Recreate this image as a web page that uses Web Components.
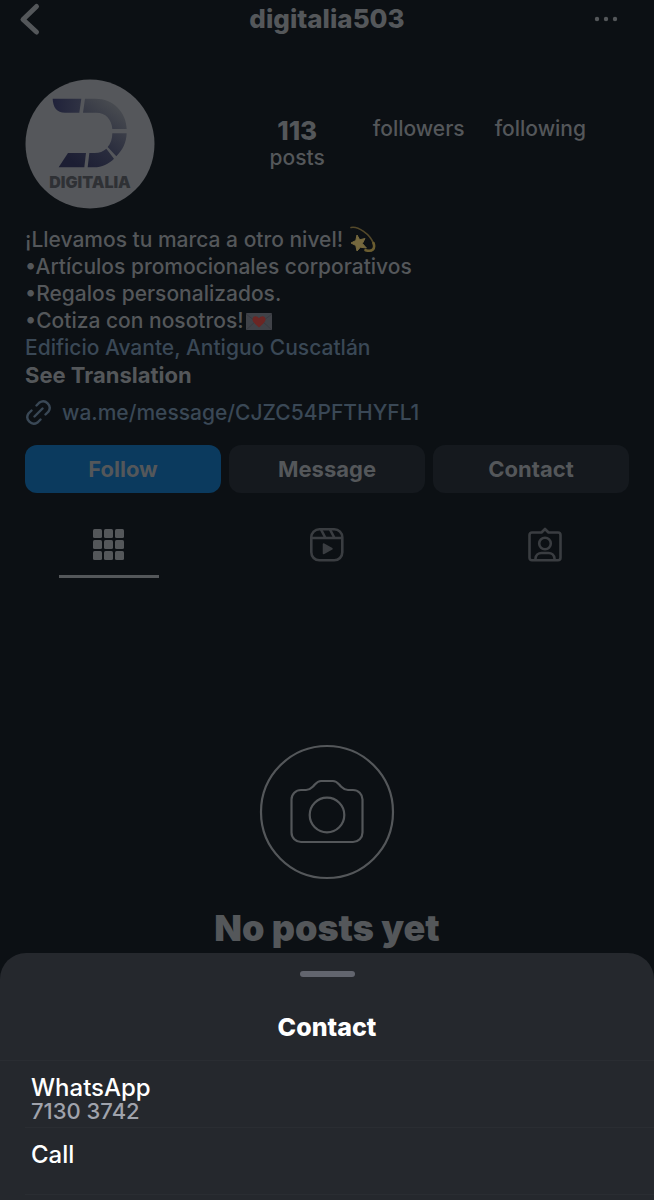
<!DOCTYPE html>
<html lang="es">
<head>
<meta charset="utf-8">
<meta name="viewport" content="width=device-width, initial-scale=1">
<title>digitalia503</title>
<style>
  html{ background: #0c1014; }
  body{
    margin: 0;
    font-family: Inter, "Liberation Sans", sans-serif;
    font-size: 21px;
    font-weight: 500;
    line-height: 27px;
    color: #54575a;
    --strong: #54575a;
    --link: #3a4856;
    --muted: #3a3d41;
  }
</style>
</head>
<body>
<profile-page>
  <profile-header slot="header">digitalia503</profile-header>
  <profile-summary slot="summary">
    <profile-stat label="posts">113</profile-stat>
    <profile-stat label="followers"></profile-stat>
    <profile-stat label="following"></profile-stat>
  </profile-summary>
  <profile-bio></profile-bio>
  <profile-actions>
    <action-button primary>Follow</action-button>
    <action-button>Message</action-button>
    <action-button>Contact</action-button>
  </profile-actions>
  <profile-tabs slot="tabs"></profile-tabs>
  <empty-posts slot="posts">No posts yet</empty-posts>
</profile-page>
<contact-sheet>
  <span slot="title">Contact</span>
  <sheet-row detail="7130 3742">WhatsApp</sheet-row>
  <sheet-row>Call</sheet-row>
</contact-sheet>

<script>
function define(name, html, setup){
  const template = document.createElement('template');
  template.innerHTML = html;

  window.customElements.define(name, class extends HTMLElement {
    constructor() {
      super();
      this.attachShadow({ mode: 'open' });
      this.shadowRoot.appendChild(template.content.cloneNode(true));
    }

    connectedCallback() {
      if(setup) setup(this, this.shadowRoot)
    }
  });
}

define("profile-page", `
  <style>
    :host{ display: block; }
    main{ display: flex; flex-direction: column; }
    .details{ padding: 0 25px; display: flex; flex-direction: column; }
  </style>
  <slot name="header"></slot>
  <main>
    <slot name="summary"></slot>
    <div class="details"><slot></slot></div>
    <slot name="tabs"></slot>
    <slot name="posts"></slot>
  </main>
`)

define("profile-header", `
  <style>
    :host{ display: block; }
    header{
      display: grid;
      grid-template-columns: 72px 1fr 72px;
      align-items: center;
      height: 38px;
      padding: 0 12px;
    }
    h1{ margin: 0; font-size: 26px; line-height: 30px; font-weight: 800; text-align: center; }
    button{ border: 0; background: none; padding: 0; color: inherit; height: 38px; display: flex; align-items: center; }
    .more{ justify-content: center; }
    svg{ display: block; }
  </style>
  <header>
    <button aria-label="Back">
      <svg width="32" height="38" viewBox="0 0 32 38" fill="none" stroke="currentColor" stroke-width="5" stroke-linecap="round" stroke-linejoin="round"><path d="M24.500 6.500 11 19.500 24.500 32"/></svg>
    </button>
    <h1><slot></slot></h1>
    <button class="more" aria-label="More">
      <svg width="28" height="8" viewBox="0 0 28 8" fill="currentColor"><circle cx="5" cy="4" r="2.200"/><circle cx="14" cy="4" r="2.200"/><circle cx="23" cy="4" r="2.200"/></svg>
    </button>
  </header>
`)

define("profile-avatar", `
  <style>
    :host{ display: block; width: 130px; height: 130px; }
    svg{ display: block; width: 100%; height: 100%; }
    text{ font-size: 16px; font-weight: 900; }
  </style>
  <svg viewBox="0 0 130 130" role="img" aria-label="Digitalia">
    <defs>
      <linearGradient id="ink" gradientUnits="userSpaceOnUse" x1="180" y1="270" x2="310" y2="100">
        <stop offset="0" stop-color="#1c1e33"/><stop offset=".45" stop-color="#2a2d3e"/><stop offset="1" stop-color="#484b50"/>
      </linearGradient>
      <linearGradient id="tip" gradientUnits="userSpaceOnUse" x1="129" y1="0" x2="214" y2="0">
        <stop offset="0" stop-color="#20223a"/><stop offset="1" stop-color="#2f3243"/>
      </linearGradient>
    </defs>
    <circle cx="65" cy="65" r="64.500" fill="#55575b"/>
    <g transform="scale(.3333) translate(-46 -28)" fill="url(#ink)">
      <path fill="url(#tip)" d="M129 87h86l-6 42h-43c-25 0-36-16-37-42z"/>
      <path d="M226 87h32c52 0 92 40 93 91h-43c-2-29-20-49-48-49h-40z"/>
      <path d="M308 191h43c-1 28-12 50-31 69l-26-28c9-10 14-24 14-41z"/>
      <path d="M290 237l23 30c-16 16-36 26-60 26h-19l5-43h16c14 0 26-5 35-13z"/>
      <path d="M175 250h54l-5 43h-77z"/>
    </g>
    <text x="65" y="109" text-anchor="middle" fill="#2f3135">DIGITALIA</text>
  </svg>
`)

define("profile-stat", `
  <style>
    :host{ display: flex; flex-direction: column; align-items: center; line-height: 27px; }
    b{ font-size: 26px; font-weight: 800; }
  </style>
  <b><slot></slot></b>
  <span id="label"></span>
`, (el, root) => {
  root.getElementById("label").textContent = el.getAttribute("label")
  root.querySelector("b").hidden = !el.textContent
})

define("profile-summary", `
  <style>
    :host{ display: flex; align-items: center; justify-content: space-between; padding: 41px 68px 0 25px; }
    .stats{ display: flex; align-items: flex-start; gap: 30px; padding-bottom: 2px; }
    ::slotted(:first-child){ margin-right: 18px; padding-top: 2px; }
  </style>
  <profile-avatar></profile-avatar>
  <div class="stats"><slot></slot></div>
`)

define("profile-bio", `
  <style>
    :host{ display: block; padding-top: 17px; }
    p{ margin: 0; }
    svg{ vertical-align: -6px; }
    a{ color: var(--link); text-decoration: none; }
    button{ display: block; border: 0; background: none; margin: 1px 0 0; padding: 0; font: inherit; font-size: 22px; font-weight: 700; color: var(--strong); }
    .url{ display: flex; align-items: center; gap: 10px; margin-top: 10px; }
  </style>
  <p>¡Llevamos tu marca a otro nivel!
    <svg width="27" height="27" viewBox="0 0 27 27" fill="none" role="img" aria-label="dizzy">
      <path d="M2 1.500C9 0 21 8 24.500 17.500 26.500 23.500 23 26 16.500 24" stroke="#54492a" stroke-width="1.600" stroke-linecap="round"/>
      <path d="M24.500 17c2 6-1 9-8 7.200" stroke="#6b5d30" stroke-width="2.600" stroke-linecap="round"/>
      <path d="M8 9l2.700 4.800 5.300-1.300-2.600 5 4 4.500-6-.800-3.400 3.800-1.200-5.500L2 17l4.800-2.500z" fill="#75683e" stroke="#75683e" stroke-linejoin="round"/>
    </svg></p>
  <p>•Artículos promocionales corporativos</p>
  <p>•Regalos personalizados.</p>
  <p>•Cotiza con nosotros!<svg width="29" height="26" viewBox="0 0 29 26" role="img" aria-label="love letter">
      <rect x="2" y="5" width="26" height="17" rx="1" fill="#404248"/>
      <path d="M2 6l13 10L28 6M2 22l9-8M28 22l-9-8" fill="none" stroke="#383a40"/>
      <path d="M15 19.500C11 16 8.500 14 8.500 11.300c0-4 5-4 6.500-1 1.500-3 6.500-3 6.500 1C21.500 14 19 16 15 19.500z" fill="#6b2624"/>
    </svg></p>
  <p><a href="#location">Edificio Avante, Antiguo Cuscatlán</a></p>
  <button>See Translation</button>
  <a class="url" href="#link">
    <svg width="27" height="27" viewBox="0 0 27 27" fill="none" stroke="currentColor" stroke-width="2.400" stroke-linecap="round" aria-hidden="true">
      <path d="M9.500 17.500l8-8M11.500 6.500l3-3a6.500 6.500 0 0 1 9 9l-3 3M6.500 11.500l-3 3a6.500 6.500 0 0 0 9 9l3-3"/>
    </svg>
    <span>wa.me/message/CJZC54PFTHYFL1</span>
  </a>
`)

define("profile-actions", `
  <style>
    :host{ display: grid; grid-template-columns: repeat(3, 1fr); gap: 8px; padding-top: 19px; }
  </style>
  <slot></slot>
`)

define("action-button", `
  <style>
    :host{ display: block; }
    button{
      width: 100%;
      height: 48px;
      border: 0;
      border-radius: 12px;
      background: #15191e;
      color: var(--strong);
      font: inherit;
      font-size: 22px;
      font-weight: 700;
    }
    :host([primary]) button{ background: #0b3a5e; }
  </style>
  <button><slot></slot></button>
`)

define("profile-tabs", `
  <style>
    :host{ display: block; padding-top: 22px; }
    div{ display: grid; grid-template-columns: repeat(3, 1fr); justify-items: center; }
    button{
      width: 100px;
      height: 63px;
      padding: 0;
      border: 0;
      border-bottom: 3px solid transparent;
      background: none;
      color: var(--muted);
      display: flex;
      align-items: center;
      justify-content: center;
    }
    button[aria-selected=true]{ color: var(--strong); border-color: currentColor; }
  </style>
  <div role="tablist">
    <button role="tab" aria-selected="true" aria-label="Posts">
      <svg width="36" height="36" viewBox="0 0 36 36" fill="currentColor">
        <rect x="2" y="2" width="9" height="9" rx="1.500"/><rect x="13" y="2" width="9" height="9" rx="1.500"/><rect x="24" y="2" width="9" height="9" rx="1.500"/>
        <rect x="2" y="13" width="9" height="9" rx="1.500"/><rect x="13" y="13" width="9" height="9" rx="1.500"/><rect x="24" y="13" width="9" height="9" rx="1.500"/>
        <rect x="2" y="24" width="9" height="9" rx="1.500"/><rect x="13" y="24" width="9" height="9" rx="1.500"/><rect x="24" y="24" width="9" height="9" rx="1.500"/>
      </svg>
    </button>
    <button role="tab" aria-selected="false" aria-label="Reels">
      <svg width="36" height="36" viewBox="0 0 36 36" fill="none" stroke="currentColor" stroke-width="2.600">
        <rect x="2.300" y="2.300" width="31" height="31" rx="8"/>
        <path d="M2.500 11h31M12 2.500l4.500 8.500M21 2.500l4.500 8.500"/>
        <path d="M14.500 17v9.500l8.500-4.750z" fill="currentColor" stroke-width="1.500" stroke-linejoin="round"/>
      </svg>
    </button>
    <button role="tab" aria-selected="false" aria-label="Tagged">
      <svg width="36" height="36" viewBox="0 0 36 36" fill="none" stroke="currentColor" stroke-width="2.600" stroke-linejoin="round">
        <path d="M14.500 5.500H5a2.500 2.500 0 0 0-2.500 2.500v23A2.500 2.500 0 0 0 5 33.300h26a2.500 2.500 0 0 0 2.500-2.500V8A2.500 2.500 0 0 0 31 5.500h-9.500L18 2z"/>
        <circle cx="18" cy="16.500" r="5.800"/>
        <path d="M8.500 33v-1.500a6 6 0 0 1 6-5.500h7a6 6 0 0 1 6 5.500V33"/>
      </svg>
    </button>
  </div>
`)

define("empty-posts", `
  <style>
    :host{ display: flex; flex-direction: column; align-items: center; gap: 26px; padding: 166px 25px 0; }
    svg{ display: block; }
    h2{ margin: 0; font-size: 36px; line-height: 44px; font-weight: 900; }
  </style>
  <svg width="136" height="136" viewBox="0 0 136 136" fill="none" stroke="currentColor" stroke-width="2.200" aria-hidden="true">
    <circle cx="68" cy="68" r="66"/>
    <path d="M42 46h5c4 0 5-1.500 7-3.500 3-3 4-5.500 8-5.500h12c4 0 5 2.500 8 5.500 2 2 3 3.500 7 3.500h5a9.500 9.500 0 0 1 9.500 9.500v33A9.500 9.500 0 0 1 94 98H42a9.500 9.500 0 0 1-9.500-9.500v-33A9.500 9.500 0 0 1 42 46z"/>
    <circle cx="68" cy="71" r="17.300"/>
  </svg>
  <h2><slot></slot></h2>
`)

define("contact-sheet", `
  <style>
    :host{
      display: block;
      position: fixed;
      left: 0;
      right: 0;
      bottom: 0;
      padding-bottom: 5px;
      background: #25282d;
      border-radius: 26px 26px 0 0;
      color: #fff;
    }
    .grip{ width: 55px; height: 6px; margin: 0 auto; border-radius: 3px; background: #62656e; }
    header{ padding: 18px 0; border-bottom: 1px solid #2a2d32; }
    h2{ margin: 35px 0 0; font-size: 25px; line-height: 30px; font-weight: 800; text-align: center; }
  </style>
  <section role="dialog" aria-label="Contact">
    <header>
      <div class="grip"></div>
      <h2><slot name="title"></slot></h2>
    </header>
    <slot></slot>
  </section>
`)

define("sheet-row", `
  <style>
    :host{ display: block; padding-left: 25px; }
    button{
      width: 100%;
      height: 67px;
      padding: 14px 6px 0;
      border: 0;
      border-bottom: 1px solid #2a2d32;
      background: none;
      color: inherit;
      font: inherit;
      font-size: 24px;
      font-weight: 500;
      line-height: 25px;
      text-align: left;
      display: flex;
      flex-direction: column;
      align-items: flex-start;
      justify-content: flex-start;
    }
    small{ font-size: 22px; line-height: 22px; color: #a0a3ac; }
    small:empty{ display: none; }
  </style>
  <button><slot></slot><small></small></button>
`, (el, root) => {
  root.querySelector("small").textContent = el.getAttribute("detail") || ""
})
</script>
</body>
</html>
